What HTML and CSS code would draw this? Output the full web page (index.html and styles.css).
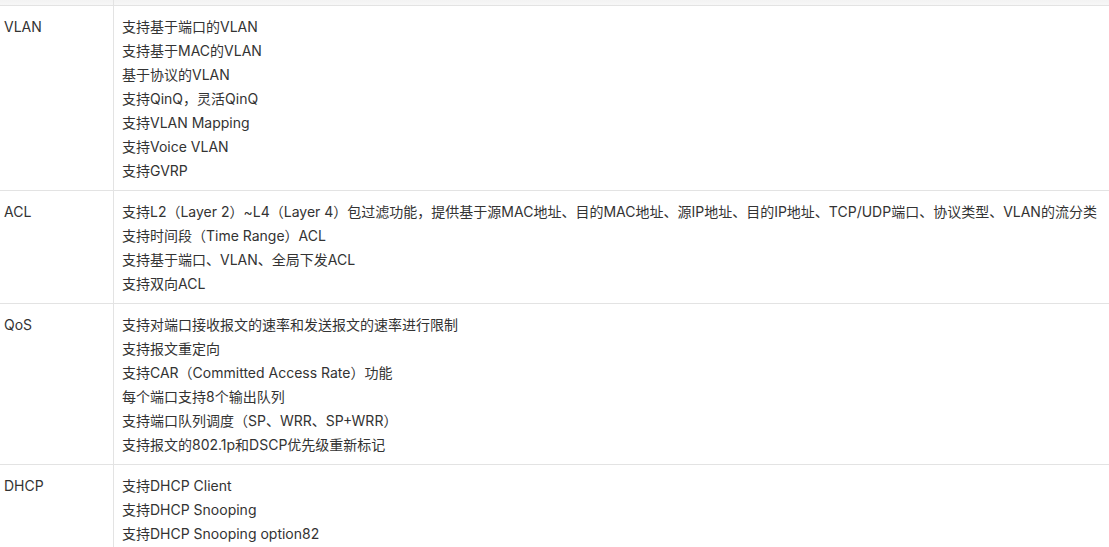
FILE: index.html
```html
<!DOCTYPE html>
<html lang="zh-CN">

<head>
  <meta charset="utf-8">
  <title>功能特性</title>

  <link rel="stylesheet" href="styles.css">

</head>

<body>
    <div class="spec">
        <div class="spec-head">
            <div class="name"></div>
            <div class="value"></div>
        </div>

        <div class="spec-row">
            <div class="name">VLAN</div>
            <div class="value">
                <p>支持基于端口的VLAN</p>
                <p>支持基于MAC的VLAN</p>
                <p>基于协议的VLAN</p>
                <p>支持QinQ，灵活QinQ</p>
                <p>支持VLAN Mapping</p>
                <p>支持Voice VLAN</p>
                <p>支持GVRP</p>
            </div>
        </div>

        <div class="spec-row">
            <div class="name">ACL</div>
            <div class="value">
                <p>支持L2（Layer 2）~L4（Layer 4）包过滤功能，提供基于源MAC地址、目的MAC地址、源IP地址、目的IP地址、TCP/UDP端口、协议类型、VLAN的流分类</p>
                <p>支持时间段（Time Range）ACL</p>
                <p>支持基于端口、VLAN、全局下发ACL</p>
                <p>支持双向ACL</p>
            </div>
        </div>

        <div class="spec-row">
            <div class="name">QoS</div>
            <div class="value">
                <p>支持对端口接收报文的速率和发送报文的速率进行限制</p>
                <p>支持报文重定向</p>
                <p>支持CAR（Committed Access Rate）功能</p>
                <p>每个端口支持8个输出队列</p>
                <p>支持端口队列调度（SP、WRR、SP+WRR）</p>
                <p>支持报文的802.1p和DSCP优先级重新标记</p>
            </div>
        </div>

        <div class="spec-row">
            <div class="name">DHCP</div>
            <div class="value">
                <p>支持DHCP Client</p>
                <p>支持DHCP Snooping</p>
                <p>支持DHCP Snooping option82</p>
            </div>
        </div>
    </div>
</body>

</html>
```

FILE: styles.css
```css
body {
	margin: 0px;
	overflow: hidden;
	background: #ffffff;
	font-family: Inter, "Noto Sans CJK SC", sans-serif;
	font-size: 14px;
	color: #333333;
}

.spec {
	width: 1109px;
	overflow: hidden;
}

.spec-head {
	display: flex;
	height: 5px;
	background: linear-gradient(#f3f3f3, #f7f7f7);
	border-bottom: 1px solid #e3e3e3;
}

.spec-row {
	display: flex;
	border-bottom: 1px solid #e3e3e3;
}

.name {
	width: 109px;
	flex: none;
	padding: 9px 0px 7px 4px;
	border-right: 1px solid #e3e3e3;
	line-height: 24px;
}

.value {
	flex: 1;
	min-width: 0;
	padding: 9px 8px 7px 8px;
	line-height: 24px;
	white-space: nowrap;
}

.spec-head .name {
	padding: 0px 0px 0px 4px;
}

.spec-head .value {
	padding: 0px;
}

.value p {
	margin: 0px;
}
```
